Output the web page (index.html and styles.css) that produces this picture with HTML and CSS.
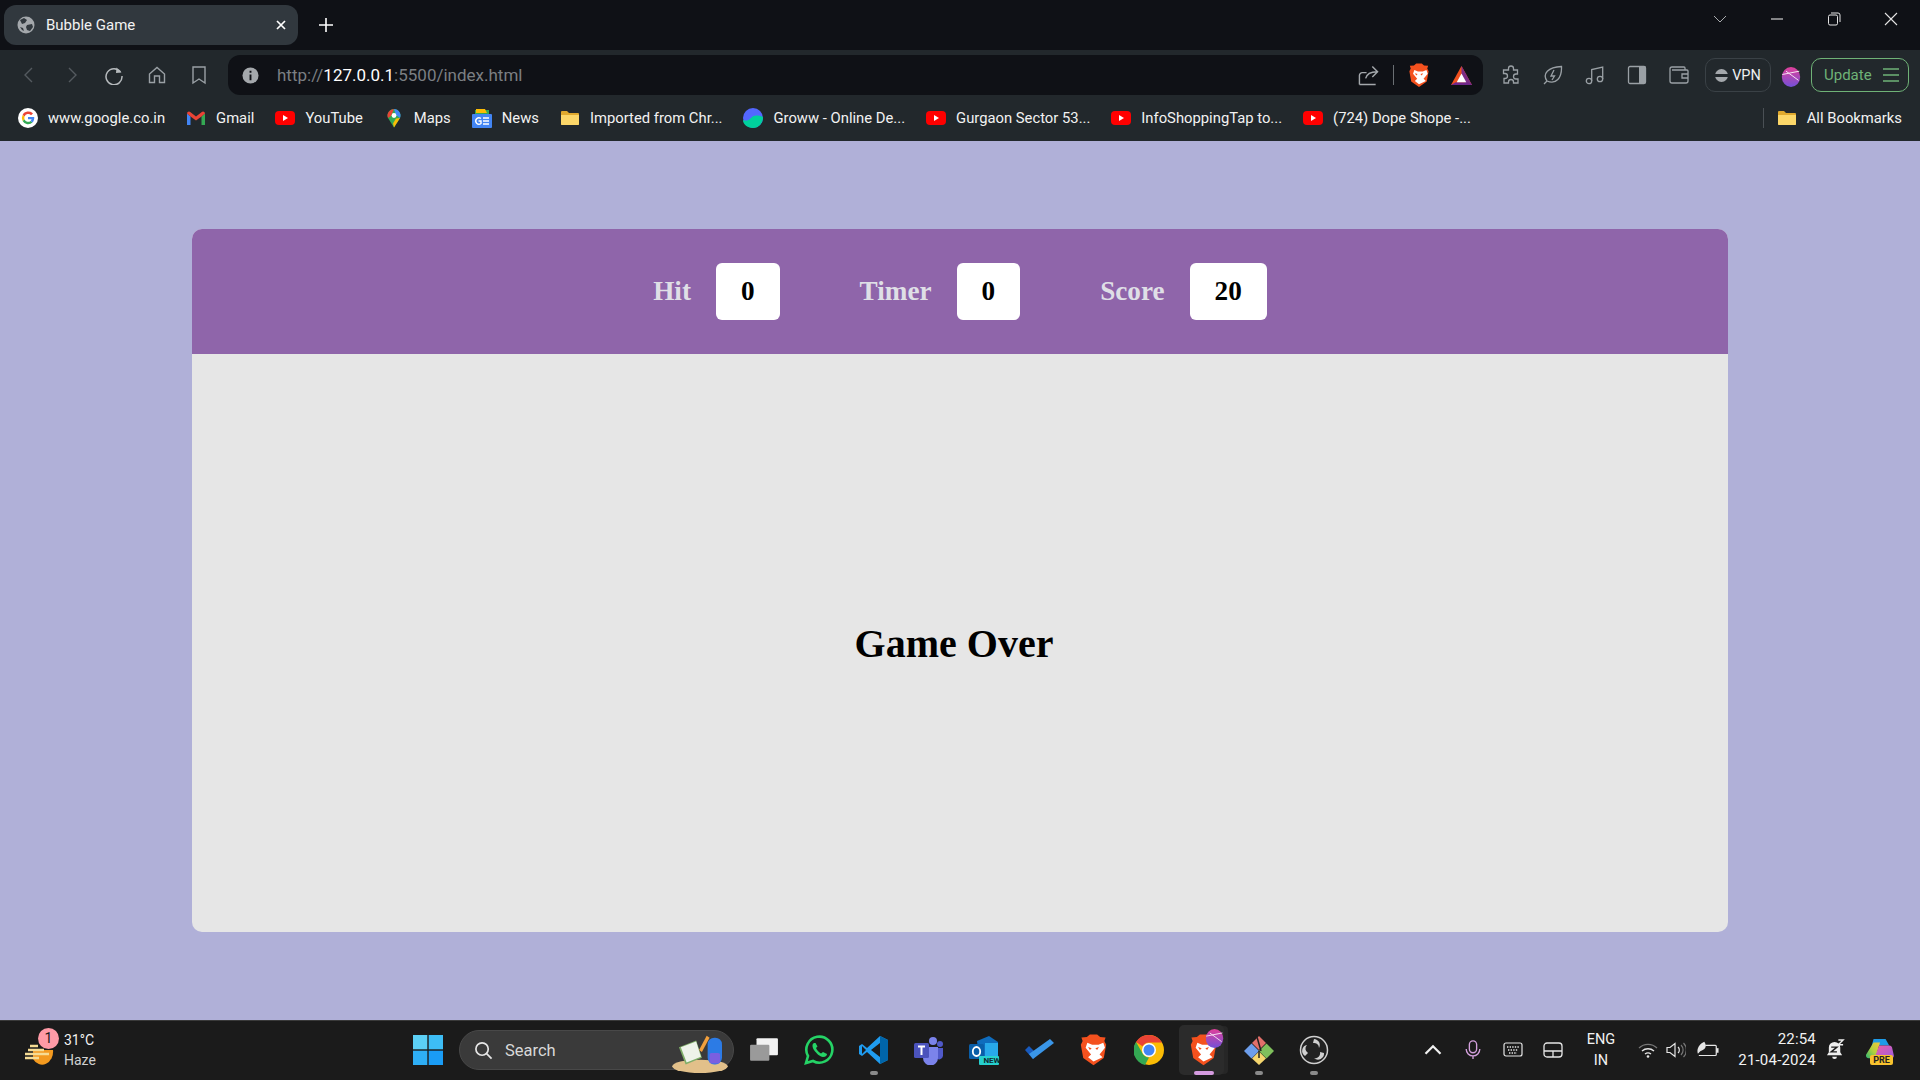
FILE: index.html
```html
<!DOCTYPE html>
<html lang="en">
<head>
    <meta charset="UTF-8">
    <title>Bubble Game</title>
    <link rel="stylesheet" href="styles.css">
</head>
<body>

    <svg class="defs" width="0" height="0">
        <defs>
            <symbol id="yt" viewBox="0 0 20 20">
                <rect x="0" y="3" width="20" height="14" rx="4" fill="#f00"/>
                <path d="M8 7l5 3-5 3z" fill="#fff"/>
            </symbol>
            <symbol id="folder" viewBox="0 0 20 20">
                <path d="M1 4a1 1 0 0 1 1-1h5l2 2h9a1 1 0 0 1 1 1v10a1 1 0 0 1-1 1H2a1 1 0 0 1-1-1z" fill="#e0a92e"/>
                <path d="M1 7h18v9a1 1 0 0 1-1 1H2a1 1 0 0 1-1-1z" fill="#fcd769"/>
            </symbol>
            <symbol id="brave" viewBox="0 0 24 26">
                <path d="M12 26L3.500 20 1.500 9 3 6 2 3l4.500-.4L9 .5h6l2.500 2.100L22 3l-1 3 1.500 3-2 11z" fill="#f4511e"/>
                <path d="M12 23l-4.500-3.500 2.500-2.300-4.500-5.700 1.400-4 4 1.600h5.200l4-1.600 1.400 4-4.500 5.700 2.500 2.300z" fill="#fff"/>
                <path d="M7.500 11l3 1-1.500 1.500zM16.500 11l-3 1 1.500 1.500z" fill="#f4511e"/>
            </symbol>
            <symbol id="orb" viewBox="0 0 24 24">
                <ellipse cx="12" cy="12" rx="11" ry="12" fill="url(#orbfill)"/>
                <path d="M1.500 9L22 5M6 5l15 11" stroke="#f7dff2" stroke-width="1.200" fill="none"/>
            </symbol>
            <linearGradient id="orbfill" x1="0" y1="0" x2="0" y2="1">
                <stop offset="0" stop-color="#e0409a"/>
                <stop offset="1" stop-color="#7350d8"/>
            </linearGradient>
        </defs>
    </svg>

    <!-- Browser tabs -->
    <div class="tabstrip">
        <div class="tab">
            <svg class="tab-globe" viewBox="0 0 18 18">
                <circle cx="9" cy="9" r="8.500" fill="#a4a8ac"/>
                <path d="M3 4l4-2 3 2-2 3-3 1zM10 9l5-1 1 3-3 4-3-1-1-3zM3 11l3 1 1 3-2-1z" fill="#31383e"/>
            </svg>
            <span class="tab-title">Bubble Game</span>
            <svg class="tab-close" viewBox="0 0 10 10"><path d="M1 1l8 8M9 1l-8 8" stroke="#fff" stroke-width="1.700"/></svg>
        </div>
        <svg class="new-tab" viewBox="0 0 16 16"><path d="M8 1v14M1 8h14" stroke="#fff" stroke-width="1.600"/></svg>
        <div class="window-controls">
            <span class="win-btn win-chevron"><svg viewBox="0 0 14 8"><path d="M1 1l6 6 6-6" stroke="#a8abae" fill="none"/></svg></span>
            <span class="win-btn"><svg viewBox="0 0 14 14"><path d="M1 7h12" stroke="#e4e4e4" stroke-width="1.100"/></svg></span>
            <span class="win-btn"><svg viewBox="0 0 14 14"><rect x="1.500" y="3" width="9" height="10" rx="1.500" stroke="#e4e4e4" fill="none"/><path d="M4 1h7a2 2 0 0 1 2 2v7" stroke="#e4e4e4" fill="none"/></svg></span>
            <span class="win-btn"><svg viewBox="0 0 14 14"><path d="M1 1l12 12M13 1L1 13" stroke="#e4e4e4" stroke-width="1.100"/></svg></span>
        </div>
    </div>

    <!-- Address bar row -->
    <div class="toolbar">
        <span class="tool"><svg viewBox="0 0 20 20"><path d="M13 3l-7 7 7 7" stroke="#545a5f" stroke-width="1.400" fill="none"/></svg></span>
        <span class="tool"><svg viewBox="0 0 20 20"><path d="M7 3l7 7-7 7" stroke="#545a5f" stroke-width="1.400" fill="none"/></svg></span>
        <span class="tool"><svg viewBox="0 0 20 20"><path d="M16.500 7A8 8 0 1 0 18 11" stroke="#b6babd" stroke-width="1.500" fill="none"/><path d="M12.500 2.500l5 5-5.500 .6z" fill="#b6babd"/></svg></span>
        <span class="tool"><svg viewBox="0 0 20 20"><path d="M2.500 9L10 2.500 17.500 9v8.500h-5V11h-5v6.500h-5z" stroke="#9aa0a5" stroke-width="1.400" fill="none"/></svg></span>
        <span class="tool"><svg viewBox="0 0 20 20"><path d="M4 2h12v16l-6-4-6 4z" stroke="#9aa0a5" stroke-width="1.400" fill="none"/></svg></span>

        <div class="address">
            <svg class="info" viewBox="0 0 18 18"><circle cx="9" cy="9" r="8.500" fill="#a4a8ac"/><path d="M9 4v2M9 8v6" stroke="#0f1116" stroke-width="2"/></svg>
            <span class="url">http://<b>127.0.0.1</b>:5500/index.html</span>
            <div class="address-end">
                <svg class="addr-share" viewBox="0 0 22 22"><path d="M1.500 20.500V11a3 3 0 0 1 3-3H9M1.500 20.500h17M8 14c1-4 4-7 12-7M15 1.500l5.500 5.500-5.500 5.500" stroke="#a4a8ac" stroke-width="1.500" fill="none"/></svg>
                <span class="addr-sep"></span>
                <svg class="addr-brave"><use href="#brave"/></svg>
                <svg class="addr-bat" viewBox="0 0 24 22"><path d="M12 1L23 21H1z" fill="#f0501e"/><path d="M12 1L23 21H17L12 10z" fill="#7b2d86"/><path d="M1 21l5-3h12l5 3z" fill="#70278a"/><path d="M12 9l5 9H7z" fill="#fff"/></svg>
            </div>
        </div>

        <span class="tool tool-right"><svg viewBox="0 0 20 20"><path d="M7.500 3.500a2.500 2.500 0 0 1 5 0V5h4v4h-1.500a2.500 2.500 0 0 0 0 5H17v4h-4.500v-1a2.500 2.500 0 0 0-5 0v1H3v-4.500h1a2.500 2.500 0 0 0 0-5H2.500V5h5z" stroke="#9aa0a5" stroke-width="1.300" fill="none"/></svg></span>
        <span class="tool tool-right"><svg viewBox="0 0 20 20"><path d="M1 19l3-3M4 16C-1 9 5 2 18.500 1.500 19 13 13 20 4 16z" stroke="#9aa0a5" stroke-width="1.300" fill="none"/><path d="M11 5l-3 6h3.500L9 15" stroke="#9aa0a5" stroke-width="1.300" fill="none"/></svg></span>
        <span class="tool tool-right"><svg viewBox="0 0 20 20"><circle cx="4" cy="16" r="2.700" stroke="#9aa0a5" stroke-width="1.300" fill="none"/><circle cx="15" cy="14" r="2.700" stroke="#9aa0a5" stroke-width="1.300" fill="none"/><path d="M6.700 16V4.500L17.700 2v12" stroke="#9aa0a5" stroke-width="1.300" fill="none"/></svg></span>
        <span class="tool tool-right"><svg viewBox="0 0 20 20"><rect x="1.500" y="1.500" width="17" height="17" rx="1.500" stroke="#9aa0a5" stroke-width="1.300" fill="none"/><rect x="12" y="1.500" width="6.500" height="17" fill="#9aa0a5"/></svg></span>
        <span class="tool tool-right"><svg viewBox="0 0 20 20"><path d="M16 5V3a1 1 0 0 0-1-1H3a2 2 0 0 0-2 2v12a2 2 0 0 0 2 2h14a2 2 0 0 0 2-2V6a1 1 0 0 0-1-1H3" stroke="#9aa0a5" stroke-width="1.300" fill="none"/><path d="M19 9h-6v4h6" stroke="#9aa0a5" stroke-width="1.300" fill="none"/></svg></span>

        <div class="vpn"><span class="vpn-dot"></span>VPN</div>
        <span class="profile"><svg><use href="#orb"/></svg></span>
        <div class="update">Update
            <svg viewBox="0 0 16 14"><path d="M0 1h16M0 7h16M0 13h16" stroke="#6fb277" stroke-width="1.300"/></svg>
        </div>
    </div>

    <!-- Bookmarks -->
    <div class="bookmarks">
        <span class="mark">
            <svg viewBox="0 0 20 20">
                <circle cx="10" cy="10" r="10" fill="#fff"/>
                <path d="M15 5.500A6.300 6.300 0 0 0 4.600 7l2 1.500A3.800 3.800 0 0 1 13 7.300z" fill="#ea4335"/>
                <path d="M4.600 7a6.300 6.300 0 0 0 0 6l2-1.500a3.800 3.800 0 0 1 0-3z" fill="#fbbc05"/>
                <path d="M4.600 13a6.300 6.300 0 0 0 9.900 1.500l-2-1.600A3.800 3.800 0 0 1 6.600 11.500z" fill="#34a853"/>
                <path d="M16.200 9H10v2.300h3.600a3 3 0 0 1-1.100 1.600l2 1.600c1.300-1.200 2-3.300 1.700-5.500z" fill="#4285f4"/>
            </svg>
            www.google.co.in
        </span>
        <span class="mark">
            <svg viewBox="0 0 20 20">
                <path d="M1 5.500V17h3.500V8.500z" fill="#4285f4"/>
                <path d="M15.500 8.500V17H19V5.500z" fill="#34a853"/>
                <path d="M1 5.500a2 2 0 0 1 3.200-1.600L10 8.500l5.800-4.600A2 2 0 0 1 19 5.500L15.500 8.500 10 12.500 4.500 8.500z" fill="#ea4335"/>
            </svg>
            Gmail
        </span>
        <span class="mark"><svg><use href="#yt"/></svg>YouTube</span>
        <span class="mark">
            <svg viewBox="0 0 20 20">
                <path d="M10 1a6.500 6.500 0 0 1 6 9L10 19.500 4 10a6.500 6.500 0 0 1 6-9z" fill="#34a853"/>
                <path d="M5 3.500A6.500 6.500 0 0 1 10 1l-3 7-3 2a6.500 6.500 0 0 1 1-6.500z" fill="#ea4335"/>
                <path d="M10 1a6.500 6.500 0 0 1 6 9l-4-3z" fill="#4285f4"/>
                <path d="M16 10l-6 9.500-1-4 3-5z" fill="#fbbc05"/>
                <circle cx="10" cy="7.500" r="2.400" fill="#fff"/>
            </svg>
            Maps
        </span>
        <span class="mark">
            <svg viewBox="0 0 20 20">
                <path d="M3 2h14v6H3z" fill="#34a853"/><path d="M4 1h9l2 4H4z" fill="#fbbc05"/>
                <rect x="0" y="6" width="20" height="14" rx="1" fill="#4285f4"/>
                <path d="M11 10h6M11 13h6M11 16h6" stroke="#fff" stroke-width="1.400"/>
                <path d="M9 10.500A3.200 3.200 0 1 0 9 15.500V13H6.500" stroke="#fff" stroke-width="1.400" fill="none"/>
            </svg>
            News
        </span>
        <span class="mark"><svg><use href="#folder"/></svg>Imported from Chr...</span>
        <span class="mark">
            <svg viewBox="0 0 20 20">
                <ellipse cx="10" cy="10" rx="10" ry="10" fill="#5367ff"/>
                <path d="M0 12c3 1 5 1 8-2s6-3 12-1c0 6-4 11-10 11S0 16 0 12z" fill="#00d09c"/>
            </svg>
            Groww - Online De...
        </span>
        <span class="mark"><svg><use href="#yt"/></svg>Gurgaon Sector 53...</span>
        <span class="mark"><svg><use href="#yt"/></svg>InfoShoppingTap to...</span>
        <span class="mark"><svg><use href="#yt"/></svg>(724) Dope Shope -...</span>
        <div class="all-marks">
            <span class="mark"><svg><use href="#folder"/></svg>All Bookmarks</span>
        </div>
    </div>

    <!-- Game -->
    <main class="page">
        <div class="panel">
            <div class="panel-top">
                <div class="stat"><h2>Hit</h2><div class="box">0</div></div>
                <div class="stat"><h2>Timer</h2><div class="box">0</div></div>
                <div class="stat"><h2>Score</h2><div class="box">20</div></div>
            </div>
            <div class="panel-bottom">
                <h1>Game Over</h1>
            </div>
        </div>
    </main>

    <!-- Windows taskbar -->
    <div class="taskbar">
        <div class="weather">
            <svg class="weather-icon" viewBox="0 0 30 30">
                <path d="M8 13h20a11 13 0 0 1-20 9z" fill="#f39a1f"/>
                <path d="M5 9h8M3 13h16M0 17h24M0 21h14" stroke="#f6dc94" stroke-width="2.500"/>
            </svg>
            <span class="weather-badge">1</span>
            <div class="weather-text"><span>31°C</span><span class="dim">Haze</span></div>
        </div>
        <span class="start">
            <svg viewBox="0 0 30 30">
                <rect x="0" y="0" width="14.300" height="14.300" fill="#5cd0f5"/>
                <rect x="15.700" y="0" width="14.300" height="14.300" fill="#3dbdf5"/>
                <rect x="0" y="15.700" width="14.300" height="14.300" fill="#2eaef5"/>
                <rect x="15.700" y="15.700" width="14.300" height="14.300" fill="#1a9cf5"/>
            </svg>
        </span>
        <div class="search">
            <svg class="search-glass" viewBox="0 0 20 20"><circle cx="8.500" cy="8.500" r="6.500" stroke="#e6e6e6" stroke-width="1.800" fill="none"/><path d="M13 13l5.500 5.500" stroke="#e6e6e6" stroke-width="1.800"/></svg>
            <span>Search</span>
            <svg class="search-art" viewBox="0 0 60 46">
                <ellipse cx="30" cy="38" rx="29" ry="7" fill="#e2c08a"/>
                <path d="M8 18l18-7 6 18-17 7z" fill="#7fae68"/>
                <path d="M10 18l16-6 5 16-15 6z" fill="#eef3ea"/>
                <path d="M29 21l8-15 3 2-8 15z" fill="#f2a03d"/>
                <rect x="38" y="8" width="15" height="28" rx="7" fill="#2c7be5"/>
                <rect x="40" y="24" width="11" height="11" rx="2" fill="#7a5fe0"/>
            </svg>
        </div>
        <div class="apps">
            <span class="app">
                <svg viewBox="0 0 28 28"><rect x="7" y="3" width="20" height="16" rx="1" fill="#f2f2f2"/><rect x="1" y="9" width="18" height="15" rx="1" fill="#9a9a9a"/></svg>
            </span>
            <span class="app">
                <svg viewBox="0 0 30 30"><path d="M2 28l2-7A13 13 0 1 1 9 26z" stroke="#25d366" stroke-width="2.600" fill="none"/><path d="M10 8c-2 1-2 4 0 7s6 7 9 7 4-2 4-3l-4-2-2 1.500c-2-1-4-3-5-5.500l1.500-1.500L11.500 8z" fill="#25d366"/></svg>
            </span>
            <span class="app app-open">
                <svg viewBox="0 0 30 30"><path d="M21 1l8 4v20l-8 4L8 17l-5 4-3-2v-8l3-2 5 4z" fill="#1f9cf0"/><path d="M21 1l8 4v20l-8 4z" fill="#0065a9"/><path d="M21 8v14l-9-7z" fill="#1b1b1b"/><path d="M3 11l4 4-4 4z" fill="#1b1b1b"/></svg>
            </span>
            <span class="app">
                <svg viewBox="0 0 30 30"><circle cx="19" cy="6" r="4" fill="#7b83eb"/><circle cx="26" cy="9" r="3" fill="#5059c9"/><path d="M22 13h7v8a4 4 0 0 1-7 2z" fill="#5059c9"/><path d="M9 12h15v11a7.500 7.500 0 0 1-15 0z" fill="#7b83eb"/><rect x="0" y="8" width="15" height="15" rx="1.500" fill="#4b53bc"/><path d="M4 11.500h7M7.500 11.500V20" stroke="#fff" stroke-width="2"/></svg>
            </span>
            <span class="app">
                <svg viewBox="0 0 30 30"><path d="M8 6l12-5 9 6v15H10z" fill="#0f6cbd"/><path d="M16 8h13v14H16z" fill="#28a8ea"/><rect x="0" y="9" width="15" height="15" rx="1.500" fill="#0a5ea8"/><ellipse cx="7.500" cy="16.500" rx="3.700" ry="4.500" stroke="#fff" stroke-width="1.800" fill="none"/><rect x="10" y="21" width="20" height="9" rx="1" fill="#26d0ce"/></svg>
                <span class="new-tag">NEW</span>
            </span>
            <span class="app">
                <svg viewBox="0 0 30 30"><path d="M1 15l4-4 8 8-4 5z" fill="#185abd"/><path d="M9 24l-4-5L26 4l4 4z" fill="#3a96e8"/></svg>
            </span>
            <span class="app"><svg class="app-brave"><use href="#brave"/></svg></span>
            <span class="app">
                <svg viewBox="0 0 30 30"><circle cx="15" cy="15" r="15" fill="#fbbc05"/><path d="M15 0a15 15 0 0 1 13 7.500H15a7.500 7.500 0 0 0-6.500 3.800L2 7A15 15 0 0 1 15 0z" fill="#ea4335"/><path d="M2 7l6.500 11.300A7.500 7.500 0 0 0 15 22.500L11 30A15 15 0 0 1 2 7z" fill="#34a853"/><circle cx="15" cy="15" r="7" fill="#fff"/><circle cx="15" cy="15" r="5.500" fill="#4285f4"/></svg>
            </span>
            <span class="app app-active">
                <svg class="app-brave"><use href="#brave"/></svg>
                <svg class="app-orb"><use href="#orb"/></svg>
            </span>
            <span class="app app-open">
                <svg viewBox="0 0 30 30"><path d="M8 8l7-7 7 7-7 7z" fill="#e2706b"/><path d="M0 16l7.500-7.500L15 16l-7.500 7.500z" fill="#6d9eeb"/><path d="M15 16l7.500-7.500L30 16l-7.500 7.500z" fill="#7fbf5c"/><path d="M8 23.500l7-7 7 7-7 6.500z" fill="#f5d66e"/><path d="M13 2l4 14M15 16v7" stroke="#222" stroke-width="1.500"/></svg>
            </span>
            <span class="app app-open">
                <svg viewBox="0 0 30 30"><circle cx="15" cy="15" r="13.500" stroke="#d0d0d0" stroke-width="1.500" fill="#222"/><path d="M15 4a6 6 0 0 1 5 9 5 5 0 0 0-6-5zM25 18a6 6 0 0 1-10 5 5 5 0 0 0 6-6zM6 21a6 6 0 0 1 2-11 5 5 0 0 0 1 8z" fill="#d0d0d0"/></svg>
            </span>
        </div>
        <div class="tray">
            <span class="tray-cell"><svg viewBox="0 0 16 10"><path d="M2 8l6-6 6 6" stroke="#f0f0f0" stroke-width="1.800" fill="none"/></svg></span>
            <span class="tray-cell"><svg viewBox="0 0 20 22"><rect x="6" y="1" width="8" height="13" rx="4" stroke="#d3a0dc" stroke-width="1.500" fill="none"/><path d="M2.500 10a7.500 7.500 0 0 0 15 0M10 17.500V21" stroke="#d3a0dc" stroke-width="1.500" fill="none"/></svg></span>
            <span class="tray-cell"><svg viewBox="0 0 20 16"><rect x="1" y="1" width="18" height="13" rx="2" stroke="#e6e6e6" stroke-width="1.200" fill="none"/><path d="M4 5h12M5 8h10M6 11h8" stroke="#e6e6e6" stroke-width="1.400" stroke-dasharray="1.400 1.200"/></svg></span>
            <span class="tray-cell"><svg viewBox="0 0 20 16"><rect x="1" y="1" width="18" height="14" rx="3" stroke="#e6e6e6" stroke-width="1.300" fill="none"/><path d="M1 9h18M10 9v6" stroke="#e6e6e6" stroke-width="1.300"/></svg></span>
            <div class="lang"><span>ENG</span><span>IN</span></div>
            <span class="status status-wifi"><svg viewBox="0 0 20 16"><path d="M1 6a13 13 0 0 1 18 0" stroke="#777" stroke-width="1.300" fill="none"/><path d="M4 9a9 9 0 0 1 12 0M7 12a5 5 0 0 1 6 0" stroke="#e6e6e6" stroke-width="1.400" fill="none"/><circle cx="10" cy="14.500" r="1.300" fill="#e6e6e6"/></svg></span>
            <span class="status"><svg viewBox="0 0 20 16"><path d="M1 5.500h3L9 1.500v13L4 10.500H1z" stroke="#e6e6e6" stroke-width="1.200" fill="none"/><path d="M12 5a4 4 0 0 1 0 6" stroke="#e6e6e6" stroke-width="1.200" fill="none"/><path d="M15 3a7 7 0 0 1 0 10M17.500 1a10 10 0 0 1 0 14" stroke="#777" stroke-width="1.200" fill="none"/></svg></span>
            <span class="status status-batt"><svg viewBox="0 0 24 18"><path d="M8 0c2 3 2 6 0 8-1.500 1.500-4 1.500-5 3L1 13C-1 8 3 2 8 0z" fill="#e6e6e6"/><path d="M9 4h11a1 1 0 0 1 1 1v9a1 1 0 0 1-1 1H2" stroke="#e6e6e6" stroke-width="1.300" fill="none"/><path d="M21 7h2.500v5H21z" fill="#e6e6e6"/></svg></span>
            <div class="clock"><span>22:54</span><span>21-04-2024</span></div>
            <span class="bell"><svg viewBox="0 0 20 22"><path d="M9 3a6 6 0 0 1 6 6v5l2 3H1l2-3V9a6 6 0 0 1 6-6zM6.500 18.500h5a2.500 2.500 0 0 1-5 0z" fill="#eee"/><path d="M5.500 8.500h6l-6 5h6" stroke="#1b1b1b" stroke-width="1.500" fill="none"/><path d="M13 1h5l-5 5h5" stroke="#eee" stroke-width="1.500" fill="none"/></svg></span>
            <span class="copilot">
                <svg viewBox="0 0 30 26">
                    <defs>
                        <linearGradient id="copleft" x1="0" y1="1" x2="1" y2="0">
                            <stop offset="0" stop-color="#2bb673"/>
                            <stop offset=".5" stop-color="#b5d13c"/>
                            <stop offset="1" stop-color="#f5c63a"/>
                        </linearGradient>
                        <linearGradient id="copright" x1="0" y1="0" x2="1" y2="1">
                            <stop offset="0" stop-color="#f05fa0"/>
                            <stop offset="1" stop-color="#9b5de5"/>
                        </linearGradient>
                    </defs>
                    <path d="M8 1h13l4 7H13l-4 12H3z" fill="#1e9be8"/>
                    <path d="M8 5h7l-5 17H3a3 3 0 0 1-3-4z" fill="url(#copleft)"/>
                    <path d="M14 8h11a3 3 0 0 1 3 2l2 9a3 3 0 0 1-3 3H9z" fill="url(#copright)"/>
                </svg>
                <span class="pre-tag">PRE</span>
            </span>
        </div>
    </div>

</body>
</html>
```

FILE: styles.css
```css
* {
    box-sizing: border-box;
}

body {
    margin: 0;
    height: 100vh;
    display: flex;
    flex-direction: column;
    overflow: hidden;
    font-family: Roboto, "Noto Sans", sans-serif;
    background: #b0b0d8;
}

svg {
    display: block;
}

.defs {
    position: absolute;
}

/* Browser tabs */
.tabstrip {
    height: 50px;
    background: #0f1116;
    display: flex;
    align-items: flex-start;
    padding: 5px 0 0 4px;
}

.tab {
    width: 294px;
    height: 40px;
    background: #31383e;
    border-radius: 12px;
    display: flex;
    align-items: center;
    padding: 0 12px 0 13px;
    color: #f2f2f2;
    font-size: 15px;
}

.tab-globe {
    width: 18px;
    height: 18px;
    margin-right: 11px;
}

.tab-title {
    flex: 1;
}

.tab-close {
    width: 10px;
    height: 10px;
}

.new-tab {
    width: 16px;
    height: 16px;
    margin: 12px 0 0 20px;
}

.window-controls {
    margin-left: auto;
    display: flex;
    padding-right: 1px;
    margin-top: -1px;
}

.win-btn {
    width: 57px;
    height: 30px;
    display: flex;
    align-items: center;
    justify-content: center;
}

.win-btn svg {
    width: 14px;
    height: 14px;
}

.win-chevron svg {
    height: 8px;
}

/* Address bar row */
.toolbar {
    height: 45px;
    background: #22282c;
    display: flex;
    align-items: flex-start;
    padding: 0 0 0 8px;
}

.tool {
    width: 42.500px;
    height: 40px;
    margin-top: 5px;
    display: flex;
    align-items: center;
    justify-content: center;
}

.tool svg {
    width: 20px;
    height: 20px;
}

.tool-right {
    width: 42px;
}

.address {
    width: 1255px;
    height: 40px;
    margin: 5px 7px 0 7.500px;
    background: #0f1116;
    border-radius: 12px;
    display: flex;
    align-items: center;
    padding: 0 0 0 14px;
}

.info {
    width: 17px;
    height: 17px;
}

.url {
    margin-left: 18px;
    font-size: 17px;
    color: #7b7f83;
}

.url b {
    font-weight: 400;
    color: #fff;
}

.address-end {
    margin-left: auto;
    display: flex;
    align-items: center;
}

.addr-share {
    width: 21px;
    height: 21px;
}

.addr-sep {
    width: 1px;
    height: 20px;
    background: #6a6f73;
    margin: 0 14px;
}

.addr-brave {
    width: 22px;
    height: 24px;
}

.addr-bat {
    width: 23px;
    height: 21px;
    margin: 0 10px 0 20px;
}

.vpn {
    width: 66px;
    height: 34px;
    margin: 8px 0 0 5px;
    border: 1px solid #3a4146;
    border-radius: 10px;
    display: flex;
    align-items: center;
    justify-content: center;
    gap: 4px;
    color: #eef0f1;
    font-size: 14.500px;
}

.vpn-dot {
    width: 13px;
    height: 13px;
    border-radius: 50%;
    background: linear-gradient(#a4a8ac 0 40%, #22282c 40% 60%, #a4a8ac 60%);
}

.profile {
    width: 40px;
    margin-top: 15px;
    display: flex;
    justify-content: center;
}

.profile svg {
    width: 20px;
    height: 24px;
}

.update {
    width: 98px;
    height: 34px;
    margin-top: 8px;
    border: 1px solid #6fb277;
    border-radius: 10px;
    display: flex;
    align-items: center;
    padding: 0 9px 0 12px;
    justify-content: space-between;
    color: #6fb277;
    font-size: 15px;
}

.update svg {
    width: 16px;
    height: 14px;
}

/* Bookmarks */
.bookmarks {
    height: 46px;
    background: #22282c;
    display: flex;
    align-items: center;
    gap: 21px;
    padding: 0 18px;
    color: #f2f2f2;
    font-size: 14.800px;
}

.mark {
    display: flex;
    align-items: center;
    gap: 10px;
    white-space: nowrap;
}

.mark svg {
    width: 20px;
    height: 20px;
}

.all-marks {
    margin-left: auto;
    border-left: 1px solid #4a5055;
    padding-left: 13px;
    height: 20px;
    display: flex;
    align-items: center;
}

/* Game */
.page {
    flex: 1;
    display: flex;
    align-items: center;
    justify-content: center;
    background: #b0b0d8;
}

.panel {
    width: 80%;
    height: 80%;
    border-radius: 10px;
    overflow: hidden;
    background: #e6e6e6;
    display: flex;
    flex-direction: column;
}

.panel-top {
    height: 125px;
    background: #8f65aa;
    display: flex;
    align-items: center;
    justify-content: center;
    gap: 80px;
    font-family: "Liberation Serif", serif;
}

.stat {
    display: flex;
    align-items: center;
    gap: 25px;
}

.stat h2 {
    margin: 0;
    font-size: 27.2px;
    color: #dfdfe6;
}

.box {
    padding: 12px 25px;
    background: #fff;
    border-radius: 6px;
    font-size: 27.2px;
    font-weight: 700;
    line-height: 33px;
    color: #000;
}

.panel-bottom {
    flex: 1;
    display: flex;
    align-items: center;
    justify-content: center;
    padding-right: 12px;
    font-family: "Liberation Serif", serif;
}

.panel-bottom h1 {
    margin: 0;
    font-size: 40px;
    color: #000;
}

/* Windows taskbar */
.taskbar {
    height: 60px;
    background: #1b1b1b;
    border-top: 1px solid #3a3a3a;
    padding-bottom: 2px;
    display: flex;
    align-items: center;
    color: #f2f2f2;
}

.weather {
    width: 408px;
    height: 100%;
    position: relative;
    display: flex;
    align-items: center;
    padding-left: 25px;
}

.weather-icon {
    width: 30px;
    height: 30px;
    margin-top: 4px;
}

.weather-badge {
    position: absolute;
    left: 38px;
    top: 7px;
    width: 21px;
    height: 21px;
    border-radius: 50%;
    background: #ff9aa6;
    color: #1b1b1b;
    font-size: 14px;
    text-align: center;
    line-height: 21px;
}

.weather-text {
    margin: 1px 0 0 9px;
    display: flex;
    flex-direction: column;
    font-size: 14px;
    line-height: 20px;
}

.dim {
    color: #d0d0d0;
}

.start {
    width: 40px;
    display: flex;
    justify-content: center;
}

.start svg {
    width: 30px;
    height: 30px;
}

.search {
    width: 275px;
    height: 40px;
    margin: 1px 0 0 11px;
    background: #3a3a3a;
    border: 1px solid #484848;
    border-radius: 20px;
    display: flex;
    align-items: center;
    padding-left: 14px;
    font-size: 16.500px;
    color: #d8d8d8;
    position: relative;
}

.search-glass {
    width: 19px;
    height: 19px;
    margin-right: 12px;
}

.search-art {
    position: absolute;
    right: 4px;
    top: -1px;
    width: 58px;
    height: 44px;
}

.apps {
    display: flex;
    margin-left: 2px;
}

.app {
    width: 55px;
    height: 50px;
    position: relative;
    display: flex;
    align-items: center;
    justify-content: center;
}

.app svg {
    width: 30px;
    height: 30px;
}

.app .app-brave {
    width: 29px;
    height: 33px;
}

.app-open::after,
.app-active::after {
    content: "";
    position: absolute;
    left: 23.500px;
    bottom: 0;
    width: 8px;
    height: 4px;
    border-radius: 2px;
    background: #8a8a8a;
}

.app-active {
    width: 45px;
    margin: 0 7.500px 0 2.500px;
    padding-left: 5px;
    background: #2b2b2b;
    border-radius: 5px;
    box-shadow: 5px 0 0 -1px #262626;
}

.app-active::after {
    left: 15px;
    width: 20px;
    background: #d59be0;
}

.app-active .app-orb {
    position: absolute;
    left: 26px;
    top: 2px;
    width: 19px;
    height: 23px;
}

.new-tag {
    position: absolute;
    left: 25px;
    top: 31px;
    width: 22px;
    font-size: 8px;
    line-height: 9px;
    font-weight: 700;
    color: #102a33;
    text-align: center;
}

.tray {
    margin-left: auto;
    padding-right: 14px;
    display: flex;
    align-items: center;
}

.tray-cell {
    width: 40px;
    display: flex;
    justify-content: center;
}

.tray-cell svg {
    width: 20px;
    height: 20px;
}

.lang {
    width: 56px;
    margin: 1px 5px 0 0;
    display: flex;
    flex-direction: column;
    align-items: center;
    font-size: 14.500px;
    line-height: 21px;
}

.status {
    width: 28px;
    display: flex;
    justify-content: center;
}

.status svg {
    width: 20px;
    height: 16px;
}

.status-batt {
    width: 36px;
}

.status-batt svg {
    width: 22px;
    height: 18px;
}

.clock {
    width: 90px;
    display: flex;
    flex-direction: column;
    align-items: flex-end;
    font-size: 15px;
    letter-spacing: .2px;
    line-height: 21px;
}

.bell {
    width: 38px;
    display: flex;
    justify-content: center;
}

.bell svg {
    width: 19px;
    height: 21px;
}

.copilot {
    width: 52px;
    position: relative;
    display: flex;
    justify-content: center;
}

.copilot svg {
    width: 28px;
    height: 24px;
}

.pre-tag {
    position: absolute;
    left: 16px;
    top: 17px;
    width: 23px;
    height: 10px;
    border-radius: 2px;
    background: #f8c22e;
    color: #222;
    font-size: 9px;
    line-height: 10px;
    font-weight: 700;
    text-align: center;
}
```
